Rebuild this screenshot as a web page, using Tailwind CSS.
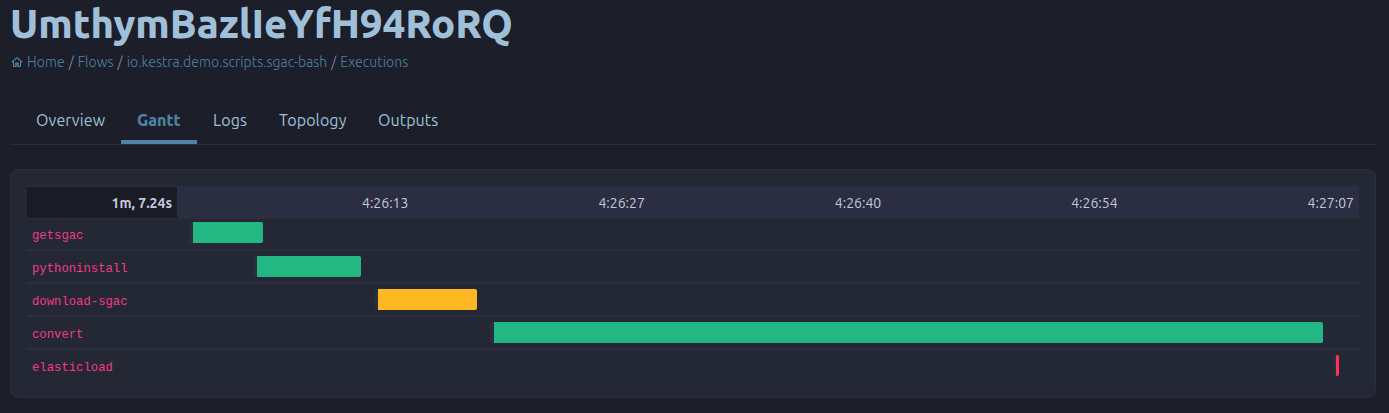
<!DOCTYPE html>
<html lang="en">
<head>
<meta charset="utf-8">
<title>Execution Gantt</title>
<script src="https://cdn.jsdelivr.net/npm/@tailwindcss/browser@4"></script>
</head>
<body class="h-[413px] overflow-hidden bg-[#1c1e2a] pl-2.5 pr-[13px] font-['Ubuntu','Noto_Sans',sans-serif] text-[#9fc0d8]">
  <h1 class="h-[50px] whitespace-nowrap text-[40px] font-extrabold leading-[48px]">UmthymBazlIeYfH94RoRQ</h1>
  <nav class="flex h-6 items-center whitespace-nowrap text-[14px] font-light leading-6 tracking-[0.045px] text-[#4f83a5]">
    <svg class="ml-px mr-1 size-3" viewBox="0 0 24 24" fill="none" stroke="currentColor" stroke-width="2.200"><path d="M1.500 12.500 12 3l10.500 9.500M5 10.500V21h4.500v-7h5v7H19V10.500M12 14v7"/></svg>
    <span>Home</span><span class="mx-1 text-[#8996a8]">/</span><span>Flows</span><span class="mx-1 text-[#8996a8]">/</span><span>io.kestra.demo.scripts.sgac-bash</span><span class="mx-1 text-[#8996a8]">/</span><span>Executions</span>
  </nav>
  <div class="mt-[22px] flex h-[49px] whitespace-nowrap border-b border-[#2a2e40] pl-2.5 text-[16px] leading-[48px] tracking-[0.1px]">
    <div class="w-[101px] pl-4">Overview</div>
    <div class="w-[76px] border-b-4 border-[#4f83a5] pl-4 font-extrabold tracking-normal text-[#4f83a5]">Gantt</div>
    <div class="w-[66px] pl-4">Logs</div>
    <div class="w-[99px] pl-4">Topology</div>
    <div class="pl-4">Outputs</div>
  </div>
  <main class="mt-6 h-[229px] rounded-lg border border-[#2a2e40] bg-[#242734] p-4 pb-0">
    <div class="flex h-[33px] bg-[#2a2e40] text-[14px] leading-[35px] text-[#c5c8dc]">
      <div class="mb-px mt-px w-[150px] bg-[#191b25] pr-[5px] text-right font-bold leading-[33px]">1m, 7.24s</div>
      <div class="grid flex-1 grid-cols-5 text-right">
        <div class="pr-[5px]">4:26:13</div><div class="pr-[5px]">4:26:27</div><div class="pr-[5px]">4:26:40</div><div class="pr-[5px]">4:26:54</div><div class="pr-[5px]">4:27:07</div>
      </div>
    </div>
    <div class="font-['Liberation_Mono',monospace] text-[12.25px] leading-[35px] text-[#f23a8a]">
      <div class="flex h-8 border-b-2 border-[#2a2e40]"><div class="w-[162px] pl-[5px]">getsgac</div><div class="mt-[3px] flex h-[21px] w-[74px] overflow-hidden rounded-xs bg-[#2a2e40] pl-1"><div class="flex-1 bg-[#23b784]"></div></div></div>
      <div class="flex h-[33px] border-b-2 border-[#2a2e40]"><div class="w-[226px] pl-[5px] pt-px">pythoninstall</div><div class="mt-[5px] flex h-[21px] w-[108px] overflow-hidden rounded-xs bg-[#2a2e40] pl-1"><div class="flex-1 bg-[#23b784]"></div></div></div>
      <div class="flex h-[33px] border-b-2 border-[#2a2e40]"><div class="w-[348px] pl-[5px] pt-px">download-sgac</div><div class="mt-[5px] flex h-[21px] w-[102px] overflow-hidden rounded-xs bg-[#2a2e40] pl-[3px]"><div class="flex-1 bg-[#ffb822]"></div></div></div>
      <div class="flex h-[33px] border-b-2 border-[#2a2e40]"><div class="w-[463px] pl-[5px] pt-px">convert</div><div class="mt-[5px] flex h-[21px] w-[833px] overflow-hidden rounded-xs bg-[#2a2e40] pl-1"><div class="flex-1 bg-[#23b784]"></div></div></div>
      <div class="flex h-[33px]"><div class="w-[1307px] pl-[5px] pt-px">elasticload</div><div class="mt-[5px] flex h-[21px] w-[5px] overflow-hidden rounded-xs bg-[#2a2e40] pl-0.5"><div class="flex-1 bg-[#fd3059]"></div></div></div>
    </div>
  </main>
</body>
</html>
